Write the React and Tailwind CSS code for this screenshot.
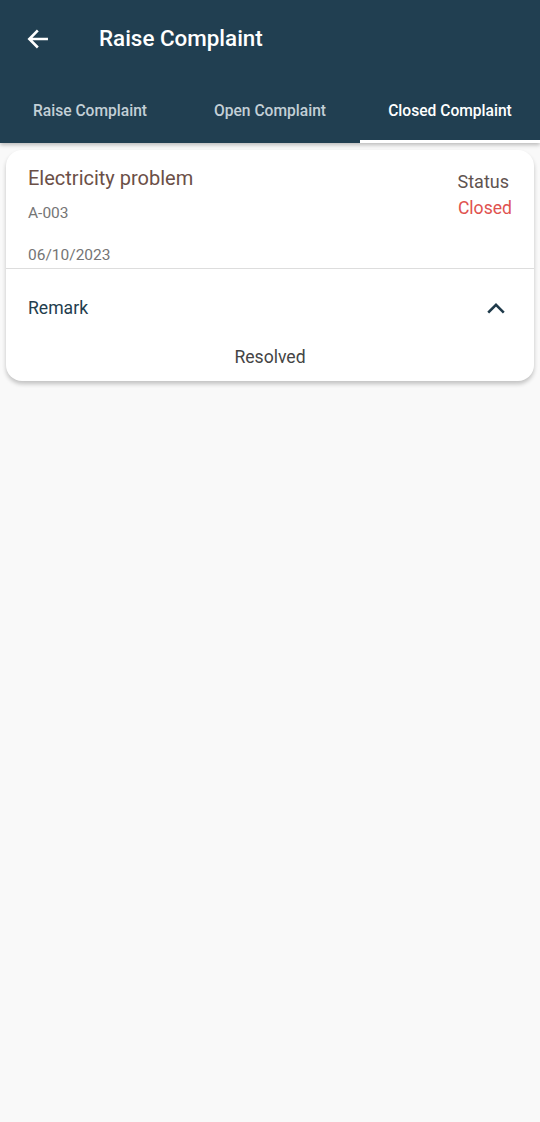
import React from "react";

const TABS = ["Raise Complaint", "Open Complaint", "Closed Complaint"];

function ArrowLeft() {
  return (
    <svg width="26" height="26" viewBox="0 0 24 24" fill="none">
      <path
        d="M20 12H4.5M11 5l-7 7 7 7"
        stroke="#ffffff"
        strokeWidth="2.4"
        strokeLinecap="square"
      />
    </svg>
  );
}

function ChevronUp() {
  return (
    <svg width="22" height="22" viewBox="0 0 24 24" fill="none">
      <path
        d="M4.5 16L12 8.5 19.5 16"
        stroke="#1f3a4a"
        strokeWidth="2.8"
        strokeLinecap="square"
      />
    </svg>
  );
}

export default function App() {
  return (
    <div
      className="min-h-[1122px] w-[540px] bg-[#f9f9f9]"
      style={{ fontFamily: "Roboto, 'Noto Sans', sans-serif" }}
    >
      <div className="bg-[#213f51] shadow-[0_2px_4px_rgba(0,0,0,0.25)]">
        <div className="flex h-[80px] items-center">
          <div className="flex w-[80px] items-center pl-[25px] pb-[2px]">
            <ArrowLeft />
          </div>
          <h1 className="pl-[19px] pb-[2px] text-[22.4px] font-medium text-white">
            Raise Complaint
          </h1>
        </div>
        <div className="grid h-[63px] grid-cols-3">
          {TABS.map((tab, i) => (
            <div key={tab} className="flex flex-col">
              <div
                className={
                  i === 2
                    ? "flex flex-1 items-center justify-center pt-[3px] text-[15.6px] font-medium text-white"
                    : "flex flex-1 items-center justify-center pt-[3px] text-[15.6px] font-medium text-[#c3cfd6]"
                }
              >
                {tab}
              </div>
              <div className={i === 2 ? "h-[3px] bg-white" : "h-[3px]"} />
            </div>
          ))}
        </div>
      </div>

      <div className="px-[6px] pt-[7px]">
        <div className="rounded-[16px] bg-white shadow-[0_3px_4px_rgba(0,0,0,0.22)]">
          <div className="flex justify-between pl-[22px] pr-[22px] pt-[12px]">
            <div className="flex flex-col">
              <div className="text-[20px] leading-[32px] text-[#6b4f47]">
                Electricity problem
              </div>
              <div className="mt-[8px] text-[15.5px] leading-[22px] text-[#757575]">
                A-003
              </div>
              <div className="mt-[20px] text-[15.5px] leading-[22px] text-[#757575]">
                06/10/2023
              </div>
            </div>
            <div className="flex flex-col items-end pt-[7px]">
              <div className="pr-[3px] text-[18px] leading-[26px] text-[#5f5350]">
                Status
              </div>
              <div className="text-[17.6px] leading-[26px] text-[#e0524f]">
                Closed
              </div>
            </div>
          </div>
          <div className="mt-[2px] h-px bg-[#dddddd]" />
          <div className="flex h-[76px] items-center justify-between pl-[22px] pr-[27px] pt-[2px]">
            <span className="text-[17.6px] text-[#233d4d]">Remark</span>
            <ChevronUp />
          </div>
          <div className="pb-[12px] text-center text-[17.6px] leading-[24px] text-[#444444]">
            Resolved
          </div>
        </div>
      </div>
    </div>
  );
}
